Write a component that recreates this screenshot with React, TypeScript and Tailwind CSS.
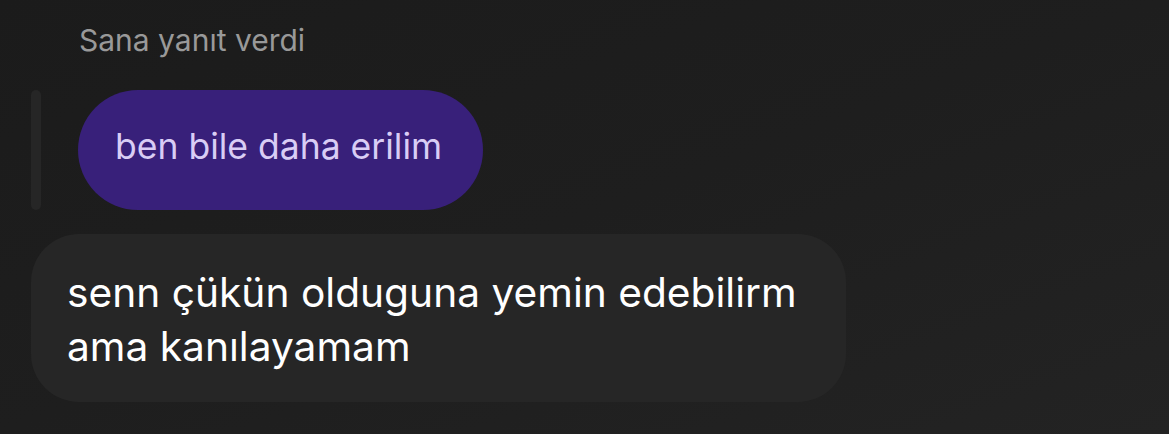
export default function App() {
  return (
    <div className="h-[434px] w-[1169px] overflow-hidden bg-gradient-to-br from-[#1b1b1b] via-[#1e1e1e] to-[#232323] font-['Inter',sans-serif]">
      <div className="flex flex-col pl-[31px] pt-[23px]">
        <div className="pl-[48px] text-[30px] leading-[34px] text-[#999999]">Sana yanıt verdi</div>

        <div className="mt-[33px] flex items-stretch gap-[37px]">
          <div className="w-[10px] rounded-full bg-[#262626]" />
          <div className="flex h-[120px] items-center rounded-full bg-[#38207a] pb-[6px] pl-[37px] pr-[41px]">
            <span className="text-[35.5px] text-[#d9cdf5]">ben bile daha erilim</span>
          </div>
        </div>

        <div className="mt-[24px] w-[815px] rounded-[48px] bg-[#262626] pb-[28px] pl-[36px] pr-[30px] pt-[32px]">
          <p className="text-[40.7px] leading-[54px] text-white">
            senn çükün olduguna yemin edebilirm
            <br />
            ama kanılayamam
          </p>
        </div>
      </div>
    </div>
  )
}
